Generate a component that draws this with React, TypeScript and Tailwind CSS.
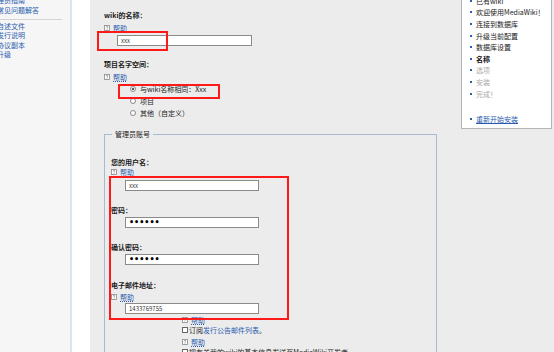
import React from "react";

const FONT = { fontFamily: '"Noto Sans CJK SC", "Noto Sans", sans-serif' };

function HelpIcon() {
  return (
    <svg width="6" height="6" viewBox="0 0 6 6" className="shrink-0">
      <rect x="0.5" y="0.5" width="5" height="5" fill="#fff" stroke="#888" strokeWidth="0.8" />
      <path d="M2.2 2.2 Q2.3 1.4 3 1.4 Q3.8 1.4 3.8 2.1 Q3.8 2.6 3 3 L3 3.6" fill="none" stroke="#666" strokeWidth="0.6" />
      <rect x="2.7" y="4.1" width="0.6" height="0.6" fill="#666" />
    </svg>
  );
}

function Help({ className = "" }: { className?: string }) {
  return (
    <div className={`flex items-center h-[10px] gap-[3px] ${className}`}>
      <HelpIcon />
      <span className="text-[7px] leading-[10px] text-[#2a5db0] underline decoration-dotted">帮助</span>
    </div>
  );
}

function Label({ children, className = "" }: { children: React.ReactNode; className?: string }) {
  return <div className={`h-[10px] text-[7px] leading-[10px] font-bold text-[#222] ${className}`}>{children}</div>;
}

function Input({ value, className = "", pw = false }: { value: string; className?: string; pw?: boolean }) {
  return (
    <div
      className={`h-[11px] w-[134px] bg-white border border-[#8a8a8a] flex items-center pl-[3px] ${className}`}
    >
      {pw ? (
        <span
          className="text-[8px] leading-[9px] font-bold text-black"
          style={{ fontFamily: '"DejaVu Sans", sans-serif' }}
        >
          {value}
        </span>
      ) : (
        <span className="text-[6px] leading-[9px] text-[#333]">{value}</span>
      )}
    </div>
  );
}

function Radio({ checked, label }: { checked?: boolean; label: string }) {
  return (
    <div className="h-[12px] flex items-center gap-[4px]">
      <div className="w-[6px] h-[6px] rounded-full border border-[#888] bg-white flex items-center justify-center">
        {checked && <div className="w-[2.5px] h-[2.5px] rounded-full bg-[#222]" />}
      </div>
      <span className="text-[7px] leading-[10px] text-[#222]">{label}</span>
    </div>
  );
}

function Checkbox() {
  return <div className="w-[6px] h-[6px] border border-[#666] bg-white shrink-0" />;
}

const steps: { t: string; c: string; b?: boolean }[] = [
  { t: "已有wiki", c: "text-[#222]" },
  { t: "欢迎使用MediaWiki！", c: "text-[#222]" },
  { t: "连接到数据库", c: "text-[#222]" },
  { t: "升级当前配置", c: "text-[#222]" },
  { t: "数据库设置", c: "text-[#222]" },
  { t: "名称", c: "text-[#111]", b: true },
  { t: "选项", c: "text-[#aaa]" },
  { t: "安装", c: "text-[#aaa]" },
  { t: "完成！", c: "text-[#aaa]" },
];

export default function App() {
  return (
    <div className="relative w-[554px] h-[352px] overflow-hidden flex bg-[#ececec]" style={FONT}>
      {/* left sidebar */}
      <div className="w-[72px] bg-[#f6f6f6] border-r-2 border-[#d8e5f4] shrink-0 overflow-hidden">
        <div className="-mt-[5px] -ml-[3px] text-[7px] text-[#2a5db0]">
          <div className="h-[10px] leading-[10px] whitespace-nowrap">理员指南</div>
          <div className="h-[10px] leading-[10px] whitespace-nowrap">常见问题解答</div>
          <div className="mt-[4px] ml-[3px] w-[62px] border-t border-[#d4d4d4]" />
          <div className="mt-[1.5px] h-[9.5px] leading-[9.5px] whitespace-nowrap">自述文件</div>
          <div className="h-[9.5px] leading-[9.5px] whitespace-nowrap">发行说明</div>
          <div className="h-[9.5px] leading-[9.5px] whitespace-nowrap">协议副本</div>
          <div className="h-[9.5px] leading-[9.5px] whitespace-nowrap">升级</div>
        </div>
      </div>
      <div className="w-[18px] bg-white shrink-0" />

      {/* main */}
      <div className="flex-1 flex">
        <div className="flex-1 flex flex-col pl-[14px] pt-[10px]">
          <Label>wiki的名称：</Label>
          <Help className="mt-[3px]" />
          <Input value="xxx" className="mt-[2px] ml-[13px] w-[135px]" />

          <Label className="mt-[13px]">项目名字空间：</Label>
          <Help className="mt-[3px]" />
          <div className="mt-[1px] ml-[26px] flex flex-col">
            <Radio checked label="与wiki名称相同：Xxx" />
            <Radio label="项目" />
            <Radio label="其他（自定义）" />
          </div>

          <fieldset className="mt-[10px] w-[333px] h-[300px] border border-[#a9b8d4] pl-[6px]">
            <legend className="ml-[1px] px-[3px] text-[7px] leading-[10px] text-[#222]">管理员账号</legend>
            <Label className="mt-[18px]">您的用户名：</Label>
            <Help />
            <Input value="xxx" className="mt-[3px] ml-[14px]" />
            <Label className="mt-[14px]">密码：</Label>
            <Input value="••••••" pw className="mt-[2px] ml-[14px]" />
            <Label className="mt-[14px]">确认密码：</Label>
            <Input value="••••••" pw className="mt-[2px] ml-[14px]" />
            <Label className="mt-[15px]">电子邮件地址：</Label>
            <Help className="mt-[2px]" />
            <Input value="1433769755" className="mt-[1px] ml-[14px]" />
            <Help className="mt-[1px] ml-[71px]" />
            <div className="h-[10px] ml-[71px] flex items-center gap-[1px] text-[7px] leading-[10px]">
              <Checkbox />
              <span className="text-[#222]">订阅</span>
              <span className="text-[#2a5db0] -ml-[1px]">发行公告邮件列表</span>
              <span className="text-[#222] -ml-[1px]">。</span>
            </div>
            <Help className="mt-[2px] ml-[71px]" />
            <div className="h-[10px] ml-[71px] flex items-center gap-[1px] text-[7px] leading-[10px]">
              <Checkbox />
              <span className="text-[#222] whitespace-nowrap">把有关我的wiki的基本信息发送至MediaWiki开发者。</span>
            </div>
          </fieldset>
        </div>

        {/* right steps panel */}
        <div className="w-[91px] mr-[2px] -mt-[12px] self-start bg-white border border-[#b4b4b4] pt-[6px] pb-[3px] pl-[8px]">
          {steps.map((s) => (
            <div key={s.t} className="h-[11.6px] flex items-center gap-[4px]">
              <div className="w-[2px] h-[2px] bg-[#2a5db0] shrink-0" />
              <span className={`text-[7px] leading-[10px] whitespace-nowrap ${s.c} ${s.b ? "font-bold" : ""}`}>{s.t}</span>
            </div>
          ))}
          <div className="mt-[14px] h-[11.6px] flex items-center gap-[4px]">
            <div className="w-[2px] h-[2px] bg-[#2a5db0] shrink-0" />
            <span className="text-[7px] leading-[10px] text-[#2a5db0] underline whitespace-nowrap">重新开始安装</span>
          </div>
        </div>
      </div>

      {/* red annotation boxes */}
      <div className="absolute left-[97px] top-[31px] w-[71px] h-[20px] border-2 border-[#ff1a1a]" />
      <div className="absolute left-[118px] top-[84px] w-[102px] h-[15px] border-2 border-[#ff1a1a]" />
      <div className="absolute left-[109px] top-[176px] w-[180px] h-[144px] border-[2.5px] border-[#ff1a1a]" />
    </div>
  );
}
